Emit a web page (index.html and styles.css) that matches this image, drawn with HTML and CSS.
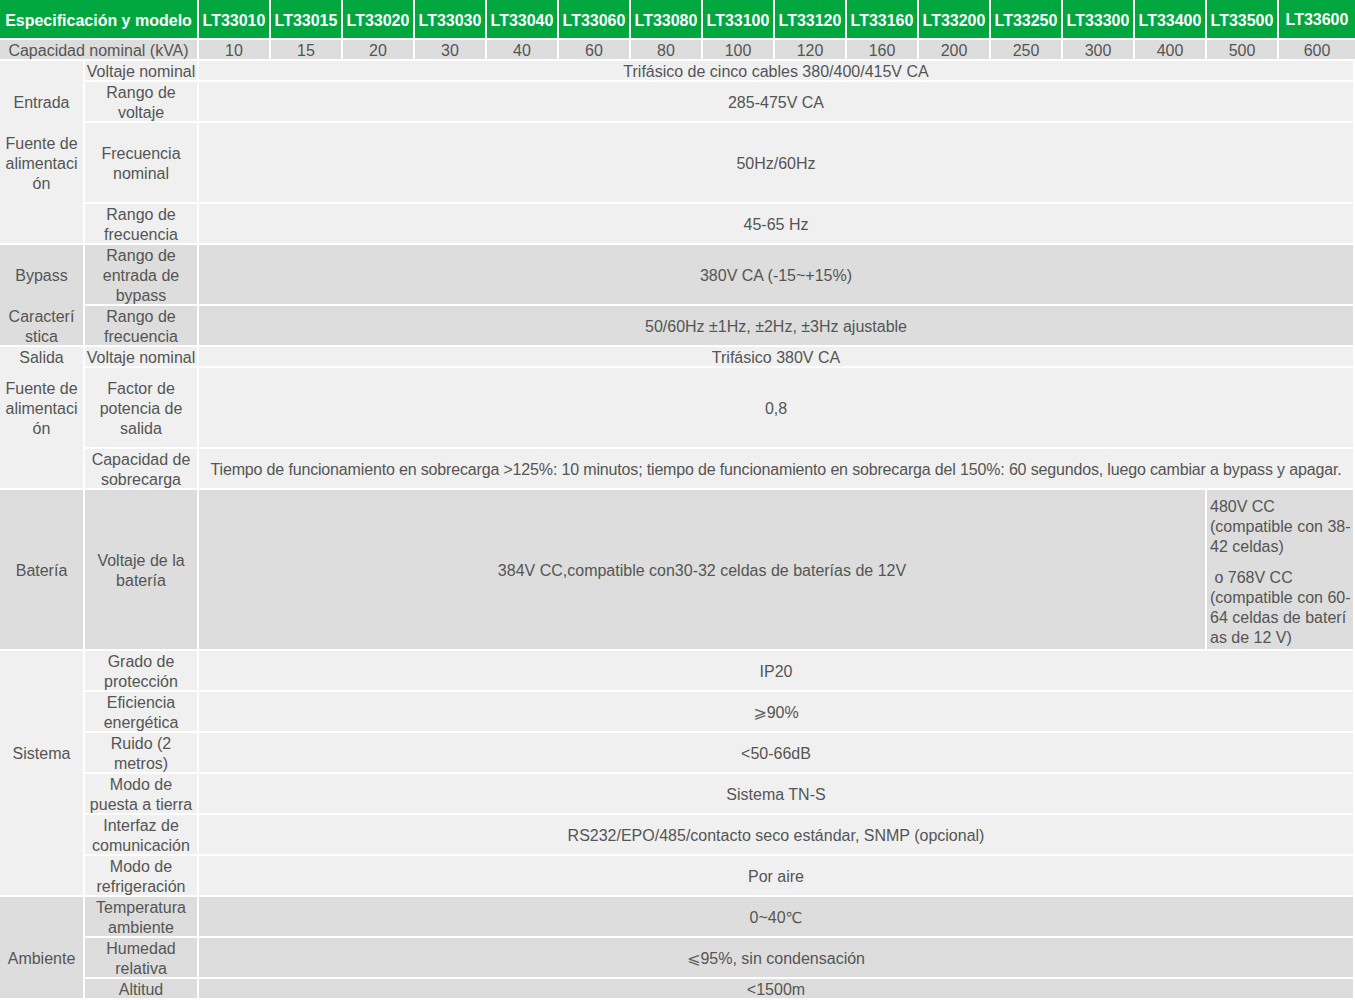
FILE: index.html
```html
<!DOCTYPE html>
<html lang="es">
<head>
<meta charset="utf-8">
<title>Especificación y modelo</title>
<link rel="stylesheet" href="styles.css">
</head>
<body>
<div class="spec">
  <div class="c hd span2">Especificación y modelo</div>
  <div class="c hd">LT33010</div>
  <div class="c hd">LT33015</div>
  <div class="c hd">LT33020</div>
  <div class="c hd">LT33030</div>
  <div class="c hd">LT33040</div>
  <div class="c hd">LT33060</div>
  <div class="c hd">LT33080</div>
  <div class="c hd">LT33100</div>
  <div class="c hd">LT33120</div>
  <div class="c hd">LT33160</div>
  <div class="c hd">LT33200</div>
  <div class="c hd">LT33250</div>
  <div class="c hd">LT33300</div>
  <div class="c hd">LT33400</div>
  <div class="c hd">LT33500</div>
  <div class="c hd last">LT33600</div>

  <div class="c d span2">Capacidad nominal (kVA)</div>
  <div class="c d">10</div>
  <div class="c d">15</div>
  <div class="c d">20</div>
  <div class="c d">30</div>
  <div class="c d">40</div>
  <div class="c d">60</div>
  <div class="c d">80</div>
  <div class="c d">100</div>
  <div class="c d">120</div>
  <div class="c d">160</div>
  <div class="c d">200</div>
  <div class="c d">250</div>
  <div class="c d">300</div>
  <div class="c d">400</div>
  <div class="c d">500</div>
  <div class="c d last">600</div>

  <div class="cat l r4 t-entrada">
    <div></div>
    <div class="ci">Entrada</div>
    <div class="ci">Fuente de alimentación</div>
    <div></div>
  </div>
  <div class="c l lbl">Voltaje nominal</div>
  <div class="c l all">Trifásico de cinco cables 380/400/415V CA</div>
  <div class="c l lbl">Rango de voltaje</div>
  <div class="c l all">285-475V CA</div>
  <div class="c l lbl">Frecuencia nominal</div>
  <div class="c l all">50Hz/60Hz</div>
  <div class="c l lbl">Rango de frecuencia</div>
  <div class="c l all">45-65 Hz</div>

  <div class="cat d r2 t-bypass">
    <div class="ci">Bypass</div>
    <div class="ci">Característica</div>
  </div>
  <div class="c d lbl">Rango de entrada de bypass</div>
  <div class="c d all">380V CA (-15~+15%)</div>
  <div class="c d lbl">Rango de frecuencia</div>
  <div class="c d all">50/60Hz ±1Hz, ±2Hz, ±3Hz ajustable</div>

  <div class="cat l r3 t-salida">
    <div class="ci">Salida</div>
    <div class="ci">Fuente de alimentación</div>
    <div></div>
  </div>
  <div class="c l lbl">Voltaje nominal</div>
  <div class="c l all">Trifásico 380V CA</div>
  <div class="c l lbl">Factor de potencia de salida</div>
  <div class="c l all">0,8</div>
  <div class="c l lbl">Capacidad de sobrecarga</div>
  <div class="c l all long">Tiempo de funcionamiento en sobrecarga &gt;125%: 10 minutos; tiempo de funcionamiento en sobrecarga del 150%: 60 segundos, luego cambiar a bypass y apagar.</div>

  <div class="c d catc">Batería</div>
  <div class="c d lbl">Voltaje de la batería</div>
  <div class="c d span14">384V CC,compatible con30-32 celdas de baterías de 12V</div>
  <div class="c d span2 batt">
    <div class="bt">
      <div>480V CC<br>(compatible con 38-42 celdas)</div>
      <div class="bt2">&nbsp;o 768V CC<br>(compatible con 60-64 celdas de baterías de 12 V)</div>
    </div>
  </div>

  <div class="cat l r6 t-sistema">
    <div></div>
    <div></div>
    <div class="ci">Sistema</div>
    <div></div>
    <div></div>
    <div></div>
  </div>
  <div class="c l lbl">Grado de protección</div>
  <div class="c l all">IP20</div>
  <div class="c l lbl">Eficiencia energética</div>
  <div class="c l all"><span><span class="sym">⩾</span>90%</span></div>
  <div class="c l lbl">Ruido (2 metros)</div>
  <div class="c l all">&lt;50-66dB</div>
  <div class="c l lbl">Modo de puesta a tierra</div>
  <div class="c l all">Sistema TN-S</div>
  <div class="c l lbl">Interfaz de comunicación</div>
  <div class="c l all">RS232/EPO/485/contacto seco estándar, SNMP (opcional)</div>
  <div class="c l lbl">Modo de refrigeración</div>
  <div class="c l all">Por aire</div>

  <div class="cat d r3 t-ambiente">
    <div></div>
    <div class="ci">Ambiente</div>
    <div></div>
  </div>
  <div class="c d lbl">Temperatura ambiente</div>
  <div class="c d all"><span>0~40<span class="cel">℃</span></span></div>
  <div class="c d lbl">Humedad relativa</div>
  <div class="c d all"><span><span class="sym">⩽</span>95%, sin condensación</span></div>
  <div class="c d lbl">Altitud</div>
  <div class="c d all">&lt;1500m</div>
</div>
</body>
</html>
```

FILE: styles.css
```css
* {
  box-sizing: border-box;
}

html,
body {
  margin: 0;
  padding: 0;
  background: #ffffff;
}

body {
  font-family: Arial, "Liberation Sans", Helvetica, sans-serif;
  font-size: 16px;
  line-height: 20px;
  color: #555555;
  overflow: hidden;
}

.spec {
  display: grid;
  width: 1353px;
  grid-template-columns: 83px 112px repeat(15, 70px) 74px;
  grid-template-rows: 38px 19px 19px 39px 79px 39px 59px 39px 19px 79px 39px 159px repeat(8, 39px) 19px;
  gap: 2px;
}

.c {
  display: flex;
  align-items: center;
  justify-content: center;
  text-align: center;
  padding-top: 2px;
}

.hd {
  background: #00a73f;
  color: #ffffff;
  font-weight: bold;
  padding-top: 3px;
}

.hd.last {
  padding-top: 1px;
  margin-right: -2px;
}

.d.last {
  margin-right: -2px;
}

.d {
  background: #dcdddc;
}

.l {
  background: #eff0ef;
}

.span2 {
  grid-column: span 2;
}

.span14 {
  grid-column: span 14;
}

.all {
  grid-column: span 16;
}

.long {
  white-space: nowrap;
  letter-spacing: -0.16px;
}

.r2 {
  grid-row: span 2;
}

.r3 {
  grid-row: span 3;
}

.r4 {
  grid-row: span 4;
}

.r6 {
  grid-row: span 6;
}

.lbl {
  padding-left: 0;
  padding-right: 0;
}

.cat {
  display: grid;
  row-gap: 2px;
}

.ci,
.catc {
  display: flex;
  align-items: center;
  justify-content: center;
  text-align: center;
  padding: 2px 5px 0;
  word-break: break-all;
}

.t-entrada {
  grid-template-rows: 19px 39px 79px 39px;
}

.t-bypass {
  grid-template-rows: 59px 39px;
}

.t-salida {
  grid-template-rows: 19px 79px 39px;
}

.t-sistema {
  grid-template-rows: repeat(6, 39px);
}

.t-ambiente {
  grid-template-rows: 39px 39px 19px;
}

.batt {
  justify-content: flex-start;
  text-align: left;
  padding: 6px 1px 0 3px;
}

.bt {
  word-break: break-all;
  line-height: 20px;
}

.bt2 {
  margin-top: 11px;
}

.sym {
  font-family: "DejaVu Sans", sans-serif;
  font-weight: normal;
  color: #666666;
}

.cel {
  font-family: "DejaVu Sans", "Noto Sans CJK SC", sans-serif;
  font-size: 15px;
}
```
